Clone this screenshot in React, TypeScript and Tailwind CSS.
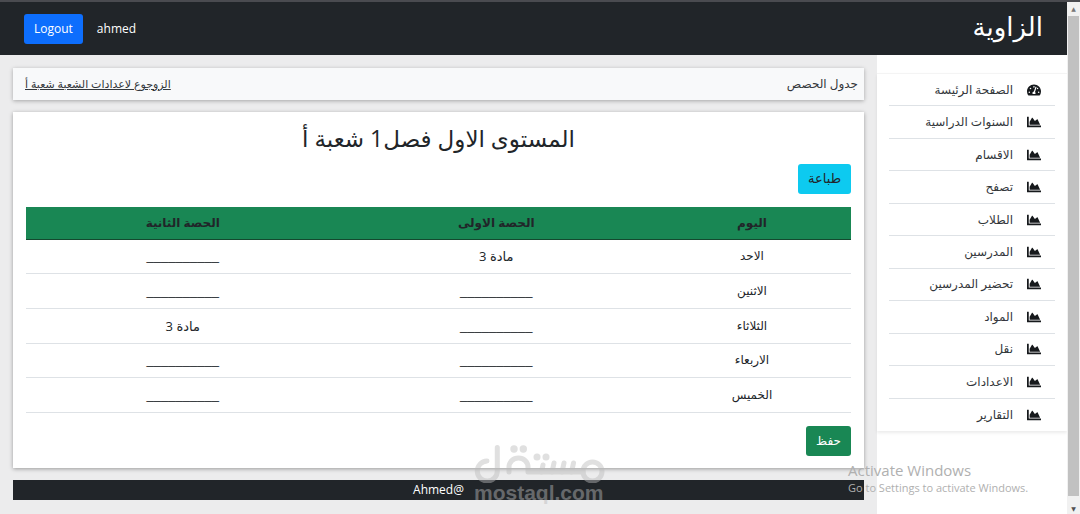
import { FaChartArea, FaTachometerAlt } from "react-icons/fa";

const navItems = [
  "الصفحة الرئيسة",
  "السنوات الدراسية",
  "الاقسام",
  "تصفح",
  "الطلاب",
  "المدرسين",
  "تحضير المدرسين",
  "المواد",
  "نقل",
  "الاعدادات",
  "التقارير",
];

const blank = "__________";

const schedule = [
  { day: "الاحد", first: "مادة 3", second: blank },
  { day: "الاثنين", first: blank, second: blank },
  { day: "الثلاثاء", first: blank, second: "مادة 3" },
  { day: "الاربعاء", first: blank, second: blank },
  { day: "الخميس", first: blank, second: blank },
];

function Header() {
  return (
    <header className="flex h-[55px] items-start justify-between border-t-2 border-[#4a4b50] bg-[#212529] px-6 text-white">
      <h1 className="pt-[7px] text-[26px] leading-[34px] font-medium">الزاوية</h1>
      <div className="flex items-center gap-[14px] pt-3">
        <span className="text-[12px] leading-5">ahmed</span>
        <button className="h-[30px] rounded-[3px] bg-[#0d6efd] px-[10px] text-[12px] leading-5">Logout</button>
      </div>
    </header>
  );
}

function Sidebar() {
  return (
    <aside className="w-[190px] shrink-0 bg-white pt-[18px]">
      <nav className="border-t border-[#f4f4f4] shadow-[0_2px_3px_rgba(0,0,0,0.08)]">
        <ul className="grid h-[357px] auto-rows-fr px-3">
          {navItems.map((label, i) => (
            <li key={label} className="border-b border-[#dee2e6] last:border-b-0">
              <a href="#" className="flex h-full items-center gap-[14px] pr-[14px] text-[12px] text-[#33373b]">
                {i === 0 ? (
                  <FaTachometerAlt className="size-[14px] text-[#16191c]" />
                ) : (
                  <FaChartArea className="size-[14px] text-[#16191c]" />
                )}
                {label}
              </a>
            </li>
          ))}
        </ul>
      </nav>
    </aside>
  );
}

function Slot({ value }: { value: string }) {
  return <td className={value === blank ? "font-['Liberation_Sans',sans-serif]" : ""}>{value}</td>;
}

function ScheduleTable() {
  return (
    <table className="mt-[13px] h-[206px] w-full table-fixed border-collapse text-center text-[#212529]">
      <thead>
        <tr className="h-8 border-b border-[#14492f] bg-[#198754] text-[12px]">
          <th className="w-[24%] font-bold">اليوم</th>
          <th className="w-[38%] font-bold">الحصة الاولى</th>
          <th className="w-[38%] font-bold">الحصة الثانية</th>
        </tr>
      </thead>
      <tbody>
        {schedule.map((row) => (
          <tr key={row.day} className="border-b border-[#dee2e6] text-[13px] leading-5">
            <td className="text-[12px]">{row.day}</td>
            <Slot value={row.first} />
            <Slot value={row.second} />
          </tr>
        ))}
      </tbody>
    </table>
  );
}

function Watermark() {
  return (
    <div dir="ltr" className="pointer-events-none absolute bottom-[11px] left-[474px] w-[132px] text-[#bbbbbb] opacity-45">
      <svg viewBox="0 0 132 40" className="block h-10 w-full" fill="none" stroke="currentColor" strokeWidth="5" strokeLinecap="round" strokeLinejoin="round">
        <path d="M23.3 4.5V28A10 10 0 1 1 13 18" />
        <path d="M35 29V24A9.5 9 0 0 1 54 24V29H109" />
        <path d="M69 22L67.5 29M80 20L78 29M90 20L88 29M99.5 20L97.5 29" />
        <circle cx="118.5" cy="28.5" r="9.5" />
        <g fill="currentColor" stroke="none">
          <circle cx="40" cy="6" r="3.7" />
          <circle cx="49.3" cy="6" r="3.7" />
          <circle cx="63" cy="14" r="3.5" />
          <circle cx="72" cy="14" r="3.5" />
        </g>
      </svg>
      <div className="font-['Liberation_Sans',sans-serif] text-[21px] leading-5 font-bold">mostaql.com</div>
    </div>
  );
}

function Scrollbar() {
  return (
    <div className="flex w-[13px] shrink-0 flex-col items-center justify-between border-t-2 border-[#4a4b50] bg-[#f1f1f1]">
      <span className="flex h-[14px] items-center text-[6px] text-[#777]">▲</span>
      <div className="w-[11px] flex-1 bg-[#c1c1c1]" />
      <span className="flex h-[18px] items-end text-[6px] text-[#505050]">▼</span>
    </div>
  );
}

export default function App() {
  return (
    <div className="relative flex min-h-screen overflow-hidden bg-[#ececed] font-['Open_Sans','DejaVu_Sans',sans-serif]">
      <div dir="rtl" className="flex min-w-0 flex-1 flex-col">
        <Header />
        <div className="flex flex-1">
          <Sidebar />
          <main className="flex min-w-0 flex-1 flex-col px-[13px] pt-[13px]">
            <div className="flex h-8 items-center justify-between bg-[#f8f9fa] pr-[6px] pl-3 text-[12px] text-[#33373b] shadow-[0_1px_4px_rgba(0,0,0,0.3)]">
              <span>جدول الحصص</span>
              <a href="#" className="text-[11px] underline">الزوجوع لاعدادات الشعبة شعبة أ</a>
            </div>
            <section className="mt-3 bg-white px-[13px] pt-[10px] pb-3 shadow-[0_1px_4px_rgba(0,0,0,0.35)]">
              <h2 className="text-center text-[23px] leading-8 text-[#212529]">المستوى الاول فصل1 شعبة أ</h2>
              <button className="mt-[10px] block h-[30px] rounded-[3px] bg-[#0dcaf0] px-[10px] text-[13px] text-[#212529]">طباعة</button>
              <ScheduleTable />
              <button className="mt-[13px] block h-[30px] rounded-[3px] bg-[#198754] px-[10px] text-[12px] text-white">حفظ</button>
            </section>
            <footer dir="ltr" className="mt-3 flex h-5 items-center justify-center bg-[#212529] text-[12px] text-white">Ahmed@</footer>
          </main>
        </div>
      </div>
      <Scrollbar />
      <Watermark />
      <div className="pointer-events-none absolute right-[44px] bottom-[18px] w-[188px] text-[#b0b0b0]">
        <p className="text-[15px] leading-5">Activate Windows</p>
        <p className="text-[11px] leading-4 whitespace-nowrap">Go to Settings to activate Windows.</p>
      </div>
    </div>
  );
}
